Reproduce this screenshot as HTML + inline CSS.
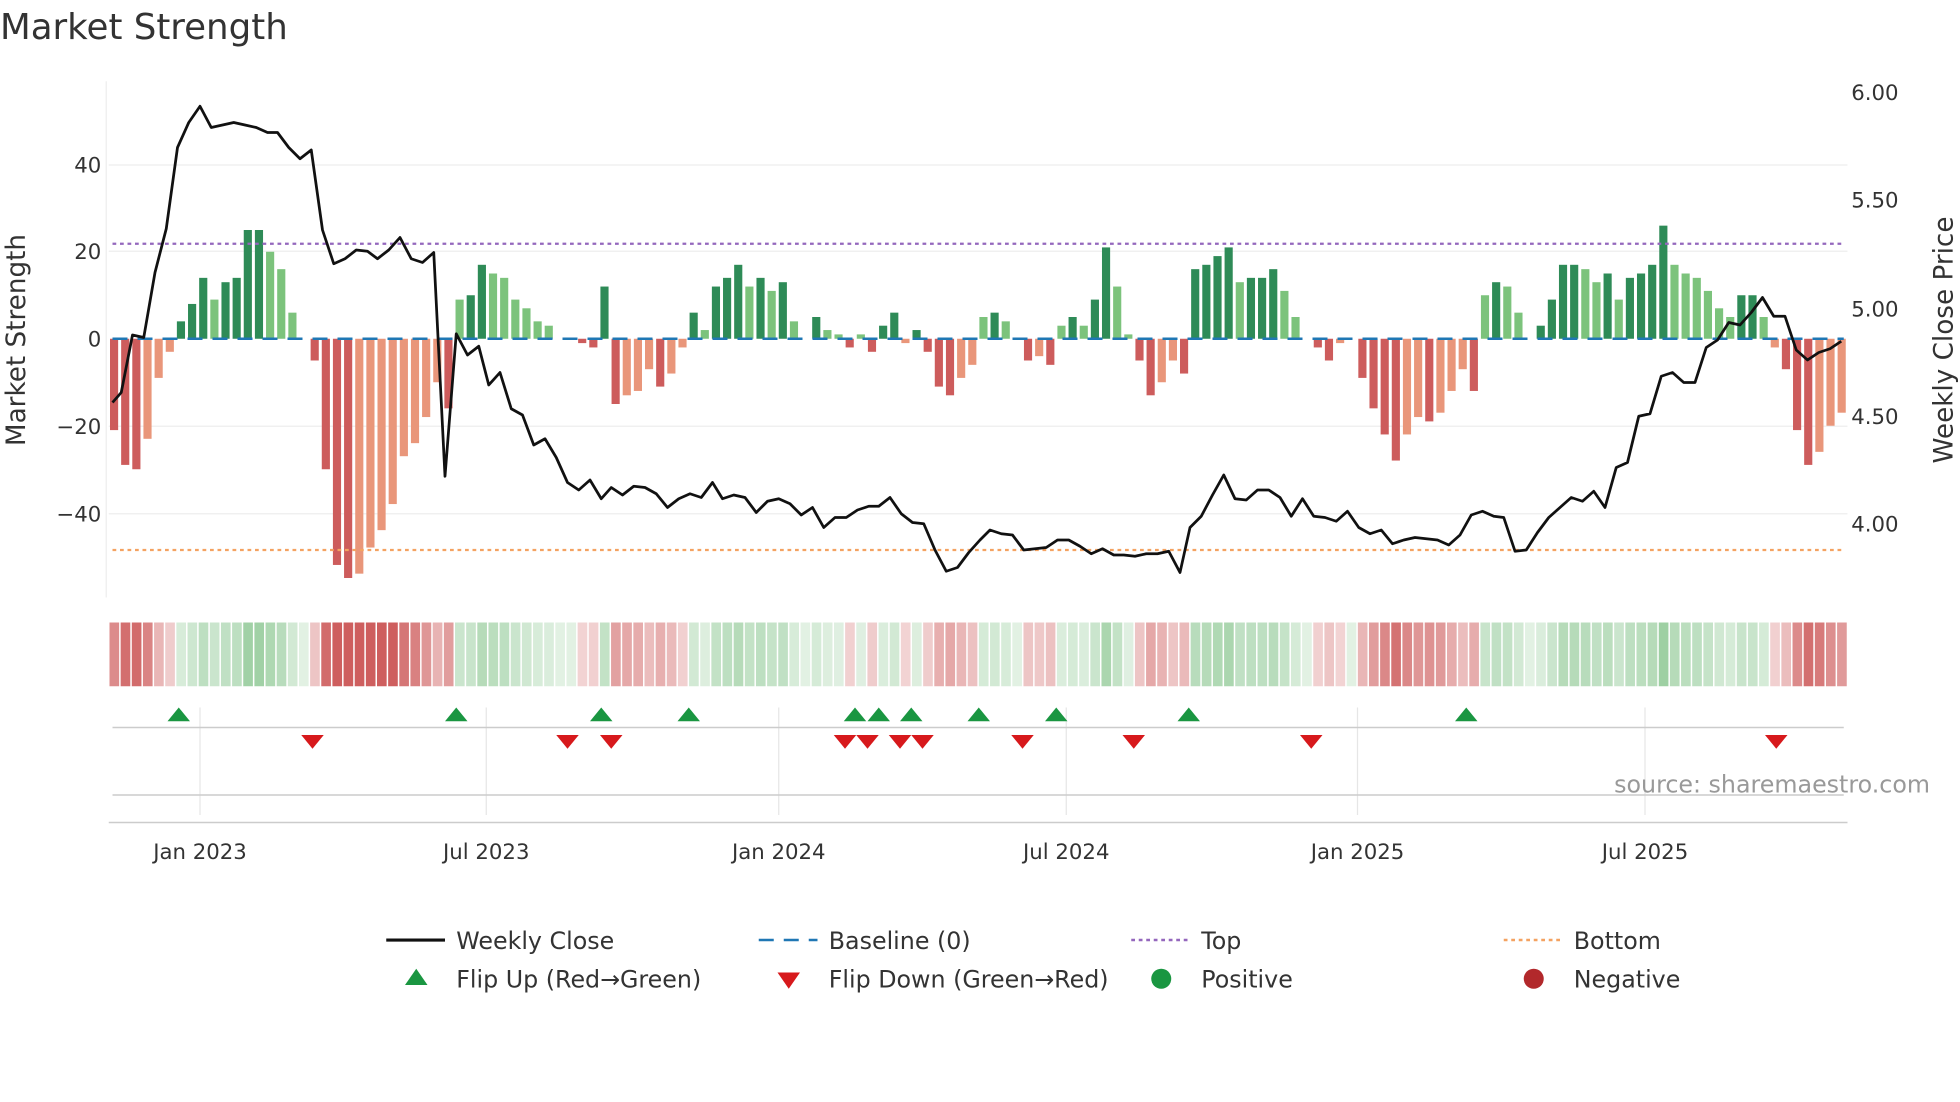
<!DOCTYPE html>
<html><head><meta charset="utf-8">
<style>
html,body{margin:0;padding:0;background:#fff;}
svg{display:block;font-family:"DejaVu Sans","Liberation Sans",sans-serif;}
</style></head>
<body>
<svg id="s" width="1960" height="1102" viewBox="0 0 1568 881.6" xmlns="http://www.w3.org/2000/svg">
<rect width="1568" height="882" fill="#fff"/>
<text x="0" y="31" font-size="28.5" fill="#333">Market Strength</text>
<g id="grid"></g>
<g id="bars"></g>
<g id="strip"></g>
<g id="ev"></g>
<g id="labels" font-size="17" fill="#333"></g>
<text transform="translate(20,272) rotate(-90)" text-anchor="middle" font-size="21" fill="#333">Market Strength</text>
<text transform="translate(1562,272) rotate(-90)" text-anchor="middle" font-size="21" fill="#333">Weekly Close Price</text>
<text x="1544" y="634" text-anchor="end" font-size="19" fill="#999">source: sharemaestro.com</text>
<g font-size="19" fill="#333">
<line x1="309" y1="752" x2="356" y2="752" stroke="#111" stroke-width="2.5"/>
<text x="365" y="759">Weekly Close</text>
<line x1="607" y1="752" x2="654" y2="752" stroke="#1f77b4" stroke-width="2" stroke-dasharray="12,8"/>
<text x="663" y="759">Baseline (0)</text>
<line x1="905" y1="752" x2="952" y2="752" stroke="#9467bd" stroke-width="2" stroke-dasharray="3,3"/>
<text x="961" y="759">Top</text>
<line x1="1203" y1="752" x2="1250" y2="752" stroke="#f4a261" stroke-width="2" stroke-dasharray="3,3"/>
<text x="1259" y="759">Bottom</text>
<polygon points="324,788 342,788 333,775" fill="#1a9641"/>
<text x="365" y="790">Flip Up (Red→Green)</text>
<polygon points="622,778 640,778 631,791" fill="#d7191c"/>
<text x="663" y="790">Flip Down (Green→Red)</text>
<circle cx="929" cy="783" r="8" fill="#1a9641"/>
<text x="961" y="790">Positive</text>
<circle cx="1227" cy="783" r="8" fill="#b2282b"/>
<text x="1259" y="790">Negative</text>
</g>
</svg>
<script>
var NS="http://www.w3.org/2000/svg";
function el(p,t,a){var e=document.createElementNS(NS,t);for(var k in a)e.setAttribute(k,a[k]);document.getElementById(p).appendChild(e);return e;}
var vals=[-21,-29,-30,-23,-9,-3,4,8,14,9,13,14,25,25,20,16,6,0,-5,-30,-52,-55,-54,-48,-44,-38,-27,-24,-18,-10,-16,9,10,17,15,14,9,7,4,3,0,0,-1,-2,12,-15,-13,-12,-7,-11,-8,-2,6,2,12,14,17,12,14,11,13,4,0,5,2,1,-2,1,-3,3,6,-1,2,-3,-11,-13,-9,-6,5,6,4,0,-5,-4,-6,3,5,3,9,21,12,1,-5,-13,-10,-5,-8,16,17,19,21,13,14,14,16,11,5,0,-2,-5,-1,0,-9,-16,-22,-28,-22,-18,-19,-17,-12,-7,-12,10,13,12,6,0,3,9,17,17,16,13,15,9,14,15,17,26,17,15,14,11,7,5,10,10,5,-2,-7,-21,-29,-26,-20,-17];
var N=vals.length, x0=87, dx=(1478-87)/N, y0=271, k=3.48;
[132,201,341,411].forEach(function(y){el('grid','line',{x1:87,x2:1478,y1:y,y2:y,stroke:'#eee','stroke-width':1});});
el('grid','line',{x1:85,x2:85,y1:65,y2:478,stroke:'#eee'});
[160,389,623,853,1086,1316].forEach(function(x){el('grid','line',{x1:x,x2:x,y1:566,y2:652,stroke:'#e6e6e6'});});
el('grid','line',{x1:90,x2:1475,y1:582,y2:582,stroke:'#ccc','stroke-width':1.2});
el('grid','line',{x1:90,x2:1475,y1:636,y2:636,stroke:'#ccc','stroke-width':1.2});
el('grid','line',{x1:87,x2:1478,y1:658,y2:658,stroke:'#ccc','stroke-width':1.2});
for(var i=0;i<N;i++){var v=vals[i],p=i?vals[i-1]:0;var dark=Math.abs(v)>=Math.abs(p);
var c=v>=0?(dark?'#2e8b57':'#7cc37c'):(dark?'#cd5c5c':'#e9967a');
var h=Math.abs(v)*k;el('bars','rect',{x:x0+i*dx+1,y:v>=0?y0-h:y0,width:dx-2.4,height:h,fill:c});
var a=Math.min(1,0.25+Math.abs(v)/45);var sc=v>=0?'rgba(60,160,70,'+(a*0.6)+')':'rgba(190,40,40,'+(a*0.75)+')';
el('strip','rect',{x:x0+i*dx+0.6,y:498,width:dx-1.2,height:51,fill:sc});}
el('bars','line',{x1:90,x2:1475,y1:271,y2:271,stroke:'#1f77b4','stroke-width':2,'stroke-dasharray':'12,8'});
el('bars','line',{x1:90,x2:1475,y1:195,y2:195,stroke:'#9467bd','stroke-width':1.8,'stroke-dasharray':'3,3'});
el('bars','line',{x1:90,x2:1475,y1:440,y2:440,stroke:'#f4a261','stroke-width':1.8,'stroke-dasharray':'3,3'});
var pts="90,322 97,314 106,268 115,270 124,218 133,183 142,118 151,98 160,85 169,102 178,100 187,98 196,100 205,102 214,106 222,106 231,118 240,127 249,120 258,184 267,211 276,207 285,200 294,201 302,207 311,200 320,190 329,207 338,210 347,202 356,381 365,267 374,284 383,277 391,308 400,298 409,327 418,332 427,356 436,351 445,366 454,386 463,392 472,384 481,399 489,390 498,396 507,389 516,390 525,395 534,406 543,399 552,395 561,398 570,386 578,399 587,396 596,398 605,410 614,401 623,399 632,403 641,412 650,406 659,422 668,414 677,414 686,408 695,405 703,405 712,398 721,411 730,418 739,419 748,440 757,457 766,454 775,442 784,432 792,424 801,427 810,428 819,440 828,439 837,438 846,432 855,432 864,437 873,443 882,439 891,444 899,444 908,445 917,443 926,443 935,441 944,458 952,422 961,413 970,396 979,380 988,399 997,400 1006,392 1015,392 1024,398 1033,413 1042,399 1051,413 1060,414 1069,417 1078,409 1087,422 1096,427 1105,424 1114,435 1123,432 1132,430 1141,431 1150,432 1159,436 1168,428 1177,412 1186,409 1195,413 1203,414 1212,441 1221,440 1230,426 1239,414 1248,406 1257,398 1266,401 1275,393 1284,406 1293,374 1302,370 1311,333 1320,331 1329,301 1338,298 1347,306 1356,306 1365,278 1374,272 1383,258 1392,260 1401,250 1410,238 1419,253 1428,253 1437,280 1446,288 1455,282 1464,279 1473,273";
el('bars','polyline',{points:pts,fill:'none',stroke:'#111','stroke-width':2.2,'stroke-linejoin':'round'});
[143,365,481,551,684,703,729,783,845,951,1173].forEach(function(x){el('ev','polygon',{points:(x-9)+',577 '+(x+9)+',577 '+x+',566',fill:'#1a9641'});});
[250,454,489,676,694,720,738,818,907,1049,1421].forEach(function(x){el('ev','polygon',{points:(x-9)+',588 '+(x+9)+',588 '+x+',599',fill:'#d7191c'});});
[["40",132],["20",201],["0",271],["\u221220",341],["\u221240",411]].forEach(function(t){var e=el('labels','text',{x:81,y:t[1]+6,'text-anchor':'end'});e.textContent=t[0];});
[["6.00",74],["5.50",160],["5.00",247],["4.50",333],["4.00",419]].forEach(function(t){var e=el('labels','text',{x:1481,y:t[1]+6});e.textContent=t[0];});
[["Jan 2023",160],["Jul 2023",389],["Jan 2024",623],["Jul 2024",853],["Jan 2025",1086],["Jul 2025",1316]].forEach(function(t){var e=el('labels','text',{x:t[1],y:687,'text-anchor':'middle'});e.textContent=t[0];});
</script>
</body></html>
